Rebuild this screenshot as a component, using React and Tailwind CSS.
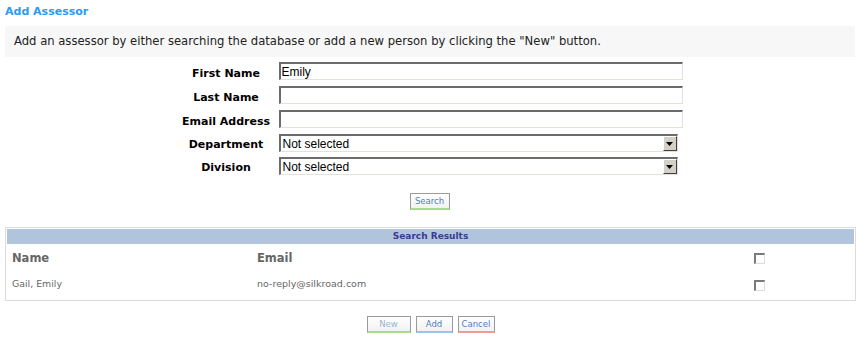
import React from 'react';

function TextBox({ value }) {
    return (
        <div className="h-[18px] w-[404px] bg-white border-t-2 border-l-2 border-b border-r border-t-[#6b6b6b] border-l-[#6b6b6b] border-b-[#e4e1d8] border-r-[#e4e1d8] px-[1px] flex items-center text-[12px] text-black font-['Liberation_Sans',Arial,sans-serif]">
            {value}
        </div>
    );
}

function SelectBox({ value }) {
    return (
        <div className="h-[18px] w-[399px] bg-white border-t-2 border-l-2 border-b border-r border-t-[#6b6b6b] border-l-[#6b6b6b] border-b-[#e4e1d8] border-r-[#e4e1d8] flex items-stretch text-[12px] text-black font-['Liberation_Sans',Arial,sans-serif]">
            <div className="flex-1 flex items-center pl-[2px]">{value}</div>
            <div className="w-[14px] bg-[#d4d0c8] border-t border-l border-b border-r border-t-white border-l-white border-b-[#404040] border-r-[#404040] flex items-center justify-center">
                <svg width="7" height="4" viewBox="0 0 7 4"><path d="M0 0h7L3.5 4z" fill="#000" /></svg>
            </div>
        </div>
    );
}

function Btn({ label, bottom, faded, width }) {
    return (
        <button className={`h-[17px] ${width} flex items-center justify-center bg-gradient-to-b from-white to-[#f2f2f2] border border-[#9a9a9a] border-b-2 ${bottom} text-[8.5px] leading-none ${faded ? 'text-[#9ab3d6]' : 'text-[#4f7fbf]'}`}>
            {label}
        </button>
    );
}

function CheckBox() {
    return (
        <div className="w-[11px] h-[11px] bg-white border-t-2 border-l-2 border-b border-r border-t-[#7a7a7a] border-l-[#7a7a7a] border-b-[#dcdcdc] border-r-[#dcdcdc]" />
    );
}

export default function App() {
    const fields = [
        { label: 'First Name', value: 'Emily' },
        { label: 'Last Name', value: '' },
        { label: 'Email Address', value: '' },
    ];

    return (
        <div className="w-[865px] h-[351px] bg-white font-['DejaVu_Sans',Verdana,sans-serif] text-[#222]">
            <div className="px-[5px] pt-[5px]">
                <h1 className="text-[11px] font-bold text-[#2b9af3] leading-[14px]">Add Assessor</h1>

                <div className="mt-[7px] h-[31px] w-[850px] bg-[#f7f7f7] flex items-center pl-[9px] text-[11.6px] text-[#222]">
                    Add an assessor by either searching the database or add a new person by clicking the "New" button.
                </div>

                <div className="mx-auto mt-[5px] w-[504px] grid grid-cols-[95px_1fr] gap-x-[5px] relative left-[-2px]">
                    {fields.map(f => (
                        <React.Fragment key={f.label}>
                            <div className="h-[24px] flex items-center justify-center text-[11px] font-bold text-black">{f.label}</div>
                            <div className="h-[24px]"><TextBox value={f.value} /></div>
                        </React.Fragment>
                    ))}
                    <div className="h-[23px] flex items-center justify-center text-[11px] font-bold text-black">Department</div>
                    <div className="h-[23px]"><SelectBox value="Not selected" /></div>
                    <div className="h-[23px] flex items-center justify-center text-[11px] font-bold text-black">Division</div>
                    <div className="h-[23px]"><SelectBox value="Not selected" /></div>
                </div>

                <div className="flex justify-center mt-[13px]">
                    <div className="relative left-[-3px]"><Btn label="Search" bottom="border-b-[#a8dc8c]" width="w-[40px]" /></div>
                </div>

                <div className="mt-[17px] w-[851px] border border-[#dcdcdc] px-[1px] pt-[1px] pb-[4px]">
                    <div className="h-[15px] bg-[#b0c4de] flex items-center justify-center text-[9px] font-bold text-[#3b3b8f]">
                        Search Results
                    </div>
                    <div className="grid grid-cols-[250px_497px_1fr] items-center">
                        <div className="h-[26px] flex items-center pl-[5px] pt-[3px] text-[11.5px] font-bold text-[#666]">Name</div>
                        <div className="h-[26px] flex items-center pt-[3px] text-[11.5px] font-bold text-[#666]">Email</div>
                        <div className="h-[26px] flex items-center pt-[2px]"><CheckBox /></div>
                        <div className="h-[26px] flex items-center pl-[5px] pt-[2px] text-[9.4px] text-[#666]">Gail, Emily</div>
                        <div className="h-[26px] flex items-center pt-[2px] text-[9.5px] text-[#666]">no-reply@silkroad.com</div>
                        <div className="h-[26px] flex items-center pt-[4px]"><CheckBox /></div>
                    </div>
                </div>

                <div className="flex justify-center gap-[5px] mt-[15px] relative left-[-2px]">
                    <Btn label="New" bottom="border-b-[#a8dc8c]" faded width="w-[44px]" />
                    <Btn label="Add" bottom="border-b-[#9cc0f0]" width="w-[37px]" />
                    <Btn label="Cancel" bottom="border-b-[#f09a9a]" width="w-[37px]" />
                </div>
            </div>
        </div>
    );
}
